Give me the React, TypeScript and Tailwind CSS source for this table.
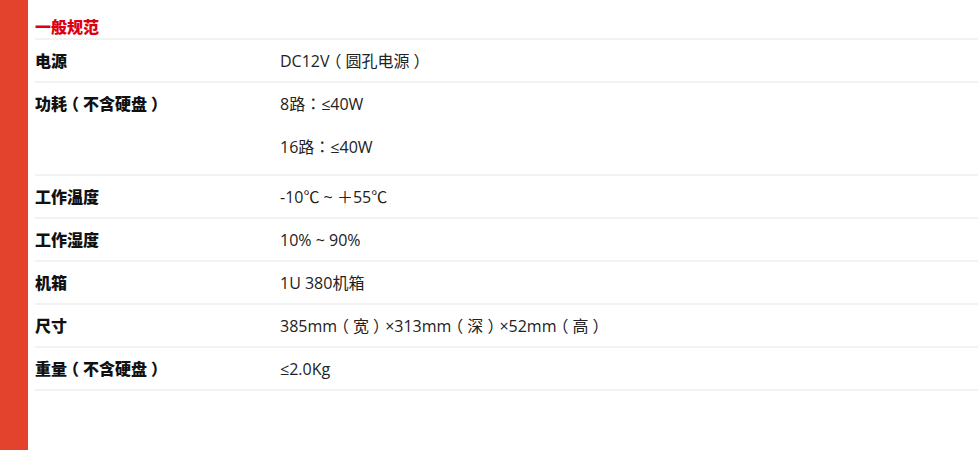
import React from "react";

const rows: { label: string; values: string[] }[] = [
  { label: "电源", values: ["DC12V（圆孔电源）"] },
  { label: "功耗（不含硬盘）", values: ["8路：≤40W", "16路：≤40W"] },
  { label: "工作温度", values: ["-10℃ ~ ＋55℃"] },
  { label: "工作湿度", values: ["10% ~ 90%"] },
  { label: "机箱", values: ["1U 380机箱"] },
  { label: "尺寸", values: ["385mm（宽）×313mm（深）×52mm（高）"] },
  { label: "重量（不含硬盘）", values: ["≤2.0Kg"] },
];

function Txt({ s }: { s: string }) {
  const parts = s.split(/([（）：])/);
  return (
    <>
      {parts.map((p, i) => {
        if (p === "（" || p === "）")
          return (
            <span key={i} className="px-[0.25em] [font-feature-settings:'halt']">
              {p}
            </span>
          );
        if (p === "：")
          return (
            <span key={i} style={{ fontFamily: '"Noto Sans CJK TC", sans-serif' }}>
              ：
            </span>
          );
        return <React.Fragment key={i}>{p}</React.Fragment>;
      })}
    </>
  );
}

export default function App() {
  return (
    <div
      className="flex w-[980px] h-[450px] bg-white overflow-hidden"
      style={{ fontFamily: '"Open Sans", "Noto Sans CJK SC", sans-serif' }}
    >
      <div className="w-[28px] shrink-0 bg-[#e3432d]" />
      <div className="flex-1 pl-[7px] pr-[2px]">
        <div className="h-[40px] flex items-end border-b-2 border-[#f2f2f2]">
          <div className="text-[16px] leading-[20px] font-black text-[#dc0011] pb-[1px]">一般规范</div>
        </div>
        {rows.map((r) => (
          <div
            key={r.label}
            className={`flex border-b-2 border-[#f2f2f2] ${r.values.length > 1 ? "pb-[7px]" : ""}`}
          >
            <div className="w-[245px] shrink-0 h-[41px] flex items-center text-[16px] font-black text-[#111]">
              <span>
                <Txt s={r.label} />
              </span>
            </div>
            <div className="flex flex-col gap-[2px]">
              {r.values.map((v) => (
                <div key={v} className="h-[41px] flex items-center text-[16px] text-[#222]">
                  <span>
                    <Txt s={v} />
                  </span>
                </div>
              ))}
            </div>
          </div>
        ))}
      </div>
    </div>
  );
}
